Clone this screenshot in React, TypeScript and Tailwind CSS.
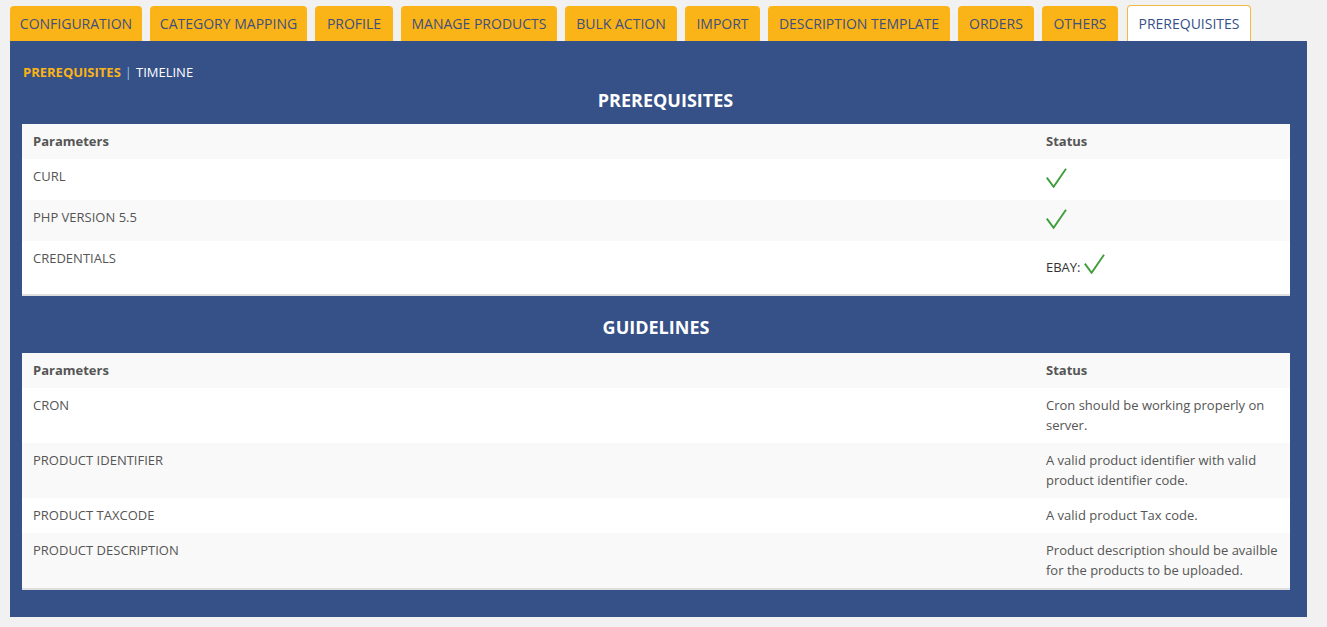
import React from "react";

const tabs: { label: string; w: string; active?: boolean }[] = [
  { label: "CONFIGURATION", w: "w-[132px]" },
  { label: "CATEGORY MAPPING", w: "w-[157px]" },
  { label: "PROFILE", w: "w-[78px]" },
  { label: "MANAGE PRODUCTS", w: "w-[156px]" },
  { label: "BULK ACTION", w: "w-[112px]" },
  { label: "IMPORT", w: "w-[75px]" },
  { label: "DESCRIPTION TEMPLATE", w: "w-[182px]" },
  { label: "ORDERS", w: "w-[76px]" },
  { label: "OTHERS", w: "w-[76px]" },
  { label: "PREREQUISITES", w: "w-[124px]", active: true },
];

function Check() {
  return (
    <svg width="21" height="20" viewBox="0 0 21 20" className="inline-block">
      <path d="M0.8 9.6 L7.6 18.8 L20 0.8" fill="none" stroke="#3f9e3a" strokeWidth="1.9" strokeLinejoin="miter" />
    </svg>
  );
}

type Row = { param: string; status: React.ReactNode; h: string };

function Table({ rows }: { rows: Row[] }) {
  return (
    <div className="border-b-2 border-[#dedede]">
      <div className="grid grid-cols-[1013px_1fr] h-[35px] items-center bg-[#f9f9f9] text-[13px] font-bold text-[#555]">
        <div className="px-[11px]">Parameters</div>
        <div className="px-[11px]">Status</div>
      </div>
      {rows.map((r, i) => (
        <div
          key={r.param}
          className={`grid grid-cols-[1013px_1fr] ${r.h} text-[13px] text-[#555] leading-[20px] ${
            i % 2 === 0 ? "bg-white" : "bg-[#f9f9f9]"
          }`}
        >
          <div className="px-[11px] pt-[7px]">{r.param}</div>
          <div className="pl-[11px] pr-[8px] pt-[7px]">{r.status}</div>
        </div>
      ))}
    </div>
  );
}

export default function App() {
  const prereq: Row[] = [
    { param: "CURL", status: <Check />, h: "h-[41px]" },
    { param: "PHP VERSION 5.5", status: <Check />, h: "h-[41px]" },
    {
      param: "CREDENTIALS",
      status: (
        <div className="pt-[6px] flex items-end gap-[3px] text-[#333]">
          <span className="leading-[14px]">EBAY:</span>
          <Check />
        </div>
      ),
      h: "h-[53px]",
    },
  ];
  const guide: Row[] = [
    { param: "CRON", status: "Cron should be working properly on server.", h: "h-[55px]" },
    {
      param: "PRODUCT IDENTIFIER",
      status: "A valid product identifier with valid product identifier code.",
      h: "h-[55px]",
    },
    { param: "PRODUCT TAXCODE", status: "A valid product Tax code.", h: "h-[35px]" },
    {
      param: "PRODUCT DESCRIPTION",
      status: "Product description should be availble for the products to be uploaded.",
      h: "h-[55px]",
    },
  ];

  return (
    <div className="min-h-[627px] w-[1327px] bg-[#f1f1f1] pt-[5px] font-['Open_Sans',sans-serif]">
      <div className="flex items-end gap-[8px] pl-[10px] h-[36px]">
        {tabs.map((t) =>
          t.active ? (
            <div
              key={t.label}
              className={`${t.w} ml-[1px] h-[36px] flex items-center justify-center rounded-t-[4px] border border-b-0 border-[#f5b845] bg-white text-[14px] text-[#36508a] pb-[1px]`}
            >
              {t.label}
            </div>
          ) : (
            <div
              key={t.label}
              className={`${t.w} h-[35px] flex items-center justify-center rounded-t-[4px] bg-[#fbb417] text-[14px] text-[#3d4f80]`}
            >
              {t.label}
            </div>
          )
        )}
      </div>
      <div className="ml-[10px] w-[1297px] bg-[#365088] pl-[12px] pr-[17px] pt-[24px] pb-[27px]">
        <div className="h-[16px] flex items-center text-[13px] pl-[1px]">
          <span className="font-bold text-[#fbb417]">PREREQUISITES</span>
          <span className="text-[#8fc6ec] mx-[4px]">|</span>
          <span className="text-white">TIMELINE</span>
        </div>
        <div className="h-[43px] flex items-center justify-center pl-[19px] pb-[4px] text-[18px] font-bold text-white">
          PREREQUISITES
        </div>
        <Table rows={prereq} />
        <div className="h-[57px] flex items-center justify-center pt-[6px] text-[18px] font-bold text-white">
          GUIDELINES
        </div>
        <Table rows={guide} />
      </div>
    </div>
  );
}
